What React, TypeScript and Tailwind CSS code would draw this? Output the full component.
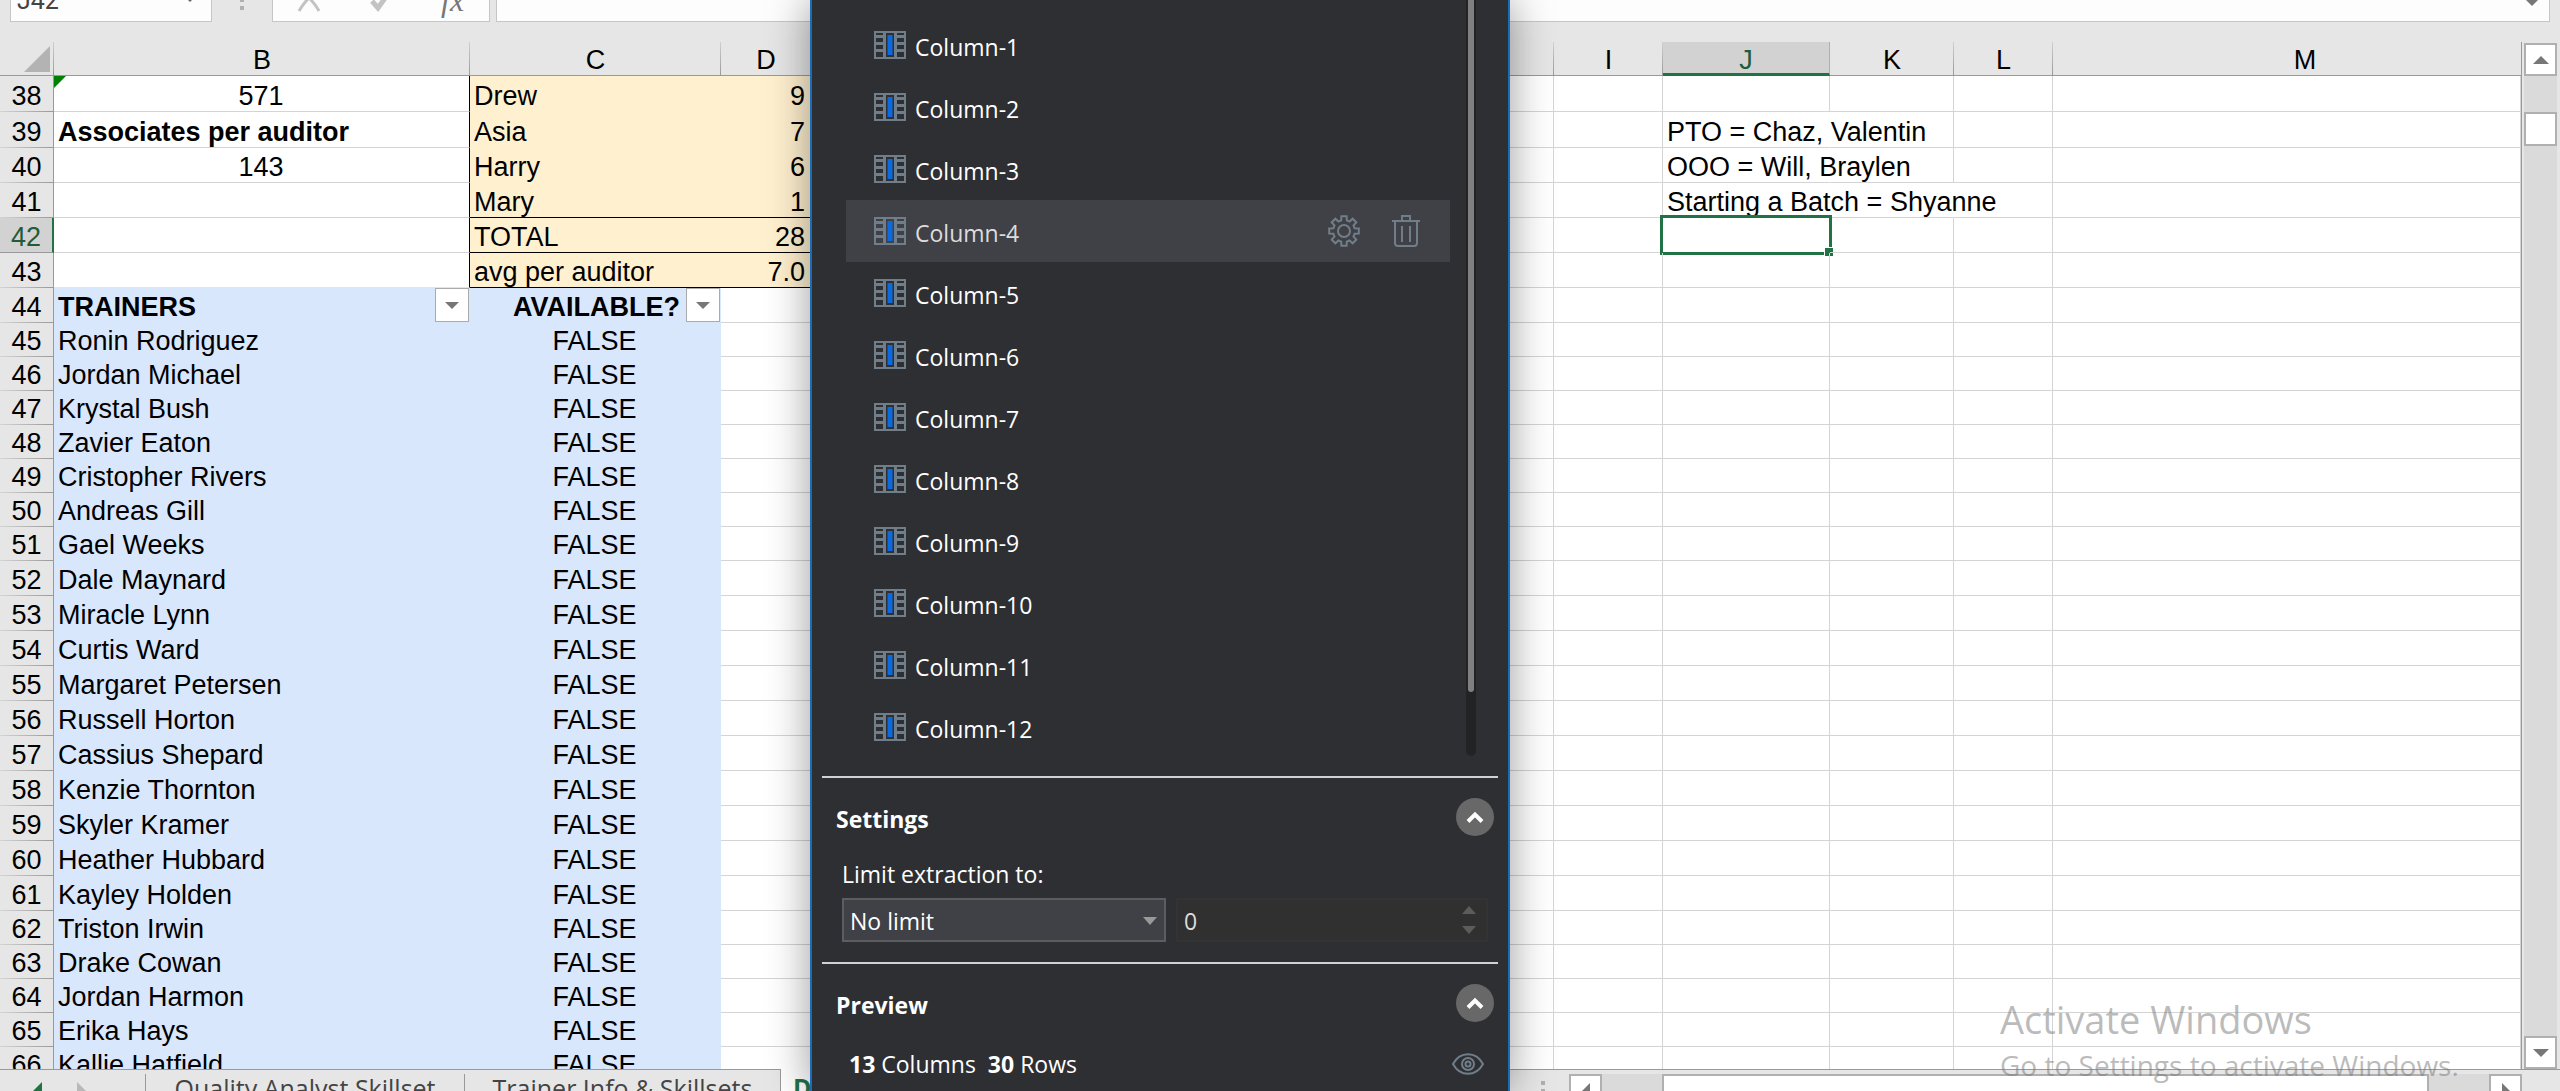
import React from "react";

type Cell = {
  text?: string;
  className?: string;
  filter?: string;
  flag?: boolean;
  active?: boolean;
};

const columns = [
  { id: "B", width: "w-[416px]" },
  { id: "C", width: "w-[251px]" },
  { id: "D", width: "w-[90px]" },
  { id: "E", width: "w-[186px]" },
  { id: "F", width: "w-[186px]" },
  { id: "G", width: "w-[186px]" },
  { id: "H", width: "w-[185px]" },
  { id: "I", width: "w-[109px]" },
  { id: "J", width: "w-[167px]" },
  { id: "K", width: "w-[124px]" },
  { id: "L", width: "w-[99px]" },
  { id: "M", width: "" },
];

const trainers = [
  "Ronin Rodriguez",
  "Jordan Michael",
  "Krystal Bush",
  "Zavier Eaton",
  "Cristopher Rivers",
  "Andreas Gill",
  "Gael Weeks",
  "Dale Maynard",
  "Miracle Lynn",
  "Curtis Ward",
  "Margaret Petersen",
  "Russell Horton",
  "Cassius Shepard",
  "Kenzie Thornton",
  "Skyler Kramer",
  "Heather Hubbard",
  "Kayley Holden",
  "Triston Irwin",
  "Drake Cowan",
  "Jordan Harmon",
  "Erika Hays",
  "Kallie Hatfield",
];

const grid = "border-r border-[#d4d4d4] pr-[5px]";
const yellow = "bg-[#fff0cf] border-[#fff0cf] pr-1.5";
const yellowTotal = "bg-[#fff0cf] border-b-black pr-1.5";
const blue = "border-r bg-[#d9e7fd] border-[#d9e7fd] pr-[5px]";
const blueFilter = "border-r bg-[#d9e7fd] border-[#d9e7fd] pr-10";
const besideYellow = "border-r border-b-[#d4d4d4] border-r-black pr-[5px]";
const open = "border-r border-b-[#d4d4d4] border-r-transparent";

const rows: Record<number, Record<string, Cell>> = {
  38: {
    B: { text: "571", className: `text-center ${besideYellow}`, flag: true },
    C: { text: "Drew", className: yellow },
    D: { text: "9", className: `text-right ${yellow}` },
  },
  39: {
    B: { text: "Associates per auditor", className: `font-bold ${besideYellow}` },
    C: { text: "Asia", className: yellow },
    D: { text: "7", className: `text-right ${yellow}` },
    J: { text: "PTO = Chaz, Valentin", className: open },
  },
  40: {
    B: { text: "143", className: `text-center ${besideYellow}` },
    C: { text: "Harry", className: yellow },
    D: { text: "6", className: `text-right ${yellow}` },
    J: { text: "OOO = Will, Braylen", className: open },
  },
  41: {
    B: { className: besideYellow },
    C: { text: "Mary", className: yellowTotal },
    D: { text: "1", className: `text-right ${yellowTotal}` },
    J: { text: "Starting a Batch = Shyanne", className: open },
    K: { className: open },
  },
  42: {
    B: { className: besideYellow },
    C: { text: "TOTAL", className: yellowTotal },
    D: { text: "28", className: `text-right ${yellowTotal}` },
    J: { className: grid, active: true },
  },
  43: {
    B: { className: "border-r border-b-[#d9e7fd] border-r-black" },
    C: { text: "avg per auditor", className: yellowTotal },
    D: { text: "7.0", className: `text-right ${yellowTotal}` },
  },
  44: {
    B: { text: "TRAINERS", className: `font-bold ${blueFilter}`, filter: "Filter trainers" },
    C: { text: "AVAILABLE?", className: `font-bold text-right ${blueFilter}`, filter: "Filter availability" },
  },
};
trainers.forEach((name, i) => {
  rows[45 + i] = {
    B: { text: name, className: blue },
    C: { text: "FALSE", className: `text-center ${blue}` },
  };
});

function rowHeight(n: number) {
  if (n <= 39) return "h-[36px]";
  if ((n >= 45 && n <= 51) || n >= 62) return "h-[34px]";
  return "h-[35px]";
}

function Triangle({ dir, className }: { dir: "up" | "down" | "left" | "right"; className: string }) {
  const d = {
    up: "M0 10 L10 0 L20 10Z",
    down: "M0 0 L20 0 L10 10Z",
    left: "M10 0 L10 20 L0 10Z",
    right: "M0 0 L10 10 L0 20Z",
  }[dir];
  const box = dir === "up" || dir === "down" ? "0 0 20 10" : "0 0 10 20";
  return (
    <svg viewBox={box} preserveAspectRatio="none" className={`fill-current ${className}`} aria-hidden="true">
      <path d={d} />
    </svg>
  );
}

function GridCell({ cell }: { cell?: Cell }) {
  return (
    <td className={`relative border-b py-0 pl-1 align-bottom whitespace-nowrap ${cell?.className ?? grid}`}>
      {cell?.text}
      {cell?.flag && (
        <svg viewBox="0 0 12 12" className="absolute top-0 left-0 h-3 w-3 fill-[#008000]" aria-hidden="true">
          <path d="M0 0H12L0 12Z" />
        </svg>
      )}
      {cell?.filter && (
        <button
          aria-label={cell.filter}
          className="absolute top-0 right-0 flex h-[34px] w-[34px] items-center justify-center border border-[#ababab] bg-white text-[#777]"
        >
          <Triangle dir="down" className="h-[7px] w-[14px]" />
        </button>
      )}
      {cell?.active && (
        <span className="absolute -top-[3px] -right-[3px] -bottom-[3px] -left-[3px] border-[3px] border-[#217346]">
          <span className="absolute -right-1 -bottom-1 h-[9px] w-[9px] border-t border-l border-white bg-[#217346]" />
        </span>
      )}
    </td>
  );
}

function FormulaBar() {
  return (
    <div className="flex h-[22px] items-end overflow-hidden pr-[10px] pl-[10px]">
      <div className="relative h-11 w-[202px] shrink-0">
        <input
          aria-label="Name box"
          defaultValue="J42"
          className="h-full w-full border border-[#c6c6c6] bg-[#fdfdfd] px-1.5 font-['Roboto',sans-serif] text-[25px] text-[#444]"
        />
        <Triangle dir="down" className="absolute right-[14px] bottom-5 h-2 w-4 text-[#666]" />
      </div>
      <div className="mb-3 ml-7 flex h-[10px] w-1 shrink-0 flex-col justify-between">
        <span className="h-[2px] w-1 bg-[#b0b0b0]" />
        <span className="h-1 w-1 bg-[#b0b0b0]" />
      </div>
      <div className="ml-7 flex h-11 w-[218px] shrink-0 items-center border border-[#c6c6c6] bg-[#fdfdfd] pr-5 pl-5">
        <button aria-label="Cancel" className="ml-1 text-[#c3c3c3]">
          <svg viewBox="0 0 24 24" className="h-6 w-6 fill-none stroke-current stroke-3" aria-hidden="true">
            <path d="M2 1C7 4 18 15 22 23M22 1C17 4 7 14 2 23" />
          </svg>
        </button>
        <button aria-label="Enter" className="ml-12 text-[#c3c3c3]">
          <svg viewBox="0 0 24 24" className="h-6 w-6 fill-none stroke-current stroke-5" aria-hidden="true">
            <path d="M3 13L9 20L21 3" />
          </svg>
        </button>
        <button
          aria-label="Insert function"
          className="ml-12 font-['Liberation_Serif',serif] text-[32px] leading-8 text-[#777] italic"
        >
          fx
        </button>
      </div>
      <div className="relative ml-1.5 h-11 flex-1">
        <input aria-label="Formula" className="h-full w-full border border-[#c6c6c6] bg-[#fdfdfd] px-2" />
        <Triangle dir="down" className="absolute right-[10px] bottom-4 h-2 w-4 text-[#777]" />
      </div>
    </div>
  );
}

function Sheet() {
  return (
    <table className="w-full table-fixed border-separate border-spacing-0 bg-white text-[27px] leading-[29px] text-black">
      <colgroup>
        <col className="w-[54px]" />
        {columns.map((c) => (
          <col key={c.id} className={c.width} />
        ))}
      </colgroup>
      <thead>
        <tr className="h-[34px] bg-[#e6e6e6]">
          <th className="relative border-b border-[#999] bg-[linear-gradient(#d0d0d0,#999)] bg-[length:1px_100%] bg-right bg-no-repeat p-0">
            <svg viewBox="0 0 26 26" className="absolute right-1 bottom-[3px] h-[26px] w-[26px] fill-[#b3b3b3]" aria-hidden="true">
              <path d="M26 0V26H0Z" />
            </svg>
          </th>
          {columns.map((c) => (
            <th
              key={c.id}
              scope="col"
              className={
                c.id === "J"
                  ? "border-r border-b-[3px] border-r-[#b0b0b0] border-b-[#217346] bg-[#d2d2d2] p-0 align-bottom leading-[26px] font-normal text-[#1e5c3a]"
                  : "border-b border-[#999] bg-[linear-gradient(#d0d0d0,#999)] bg-[length:1px_100%] bg-right bg-no-repeat p-0 align-bottom font-normal last:bg-none last:pl-9"
              }
            >
              {c.id}
            </th>
          ))}
        </tr>
      </thead>
      <tbody>
        {Object.keys(rows).map((key) => {
          const n = Number(key);
          return (
            <tr key={n} className={rowHeight(n)}>
              <th
                scope="row"
                className={
                  n === 42
                    ? "border-r-2 border-b border-r-[#217346] border-b-[#999] bg-[#d2d2d2] p-0 align-bottom font-normal text-[#1e5c3a]"
                    : "border-r border-[#999] bg-[#e6e6e6] bg-[linear-gradient(to_right,#d4d4d4,#999)] bg-[length:100%_1px] bg-bottom bg-no-repeat p-0 pb-px align-bottom font-normal"
                }
              >
                {n}
              </th>
              {columns.map((c) => (
                <GridCell key={c.id} cell={rows[n][c.id]} />
              ))}
            </tr>
          );
        })}
      </tbody>
    </table>
  );
}

function VerticalScroll() {
  return (
    <div className="mt-px mr-[3px] ml-0.5 flex w-[33px] shrink-0 flex-col bg-[#dadada]">
      <button aria-label="Scroll up" className="flex h-[33px] items-center justify-center border-2 border-[#b0b0b0] bg-white text-[#777]">
        <Triangle dir="up" className="h-2 w-4" />
      </button>
      <div className="mt-9 h-[34px] border-2 border-[#b0b0b0] bg-white" />
      <button
        aria-label="Scroll down"
        className="mt-auto flex h-[33px] items-center justify-center border-2 border-[#b0b0b0] bg-white text-[#777]"
      >
        <Triangle dir="down" className="h-2 w-4" />
      </button>
    </div>
  );
}

function SheetTabs() {
  return (
    <div className="flex h-[22px] items-start overflow-hidden font-['Open_Sans',sans-serif] text-[25px] text-[#444]">
      <div className="flex w-[781px] shrink-0 items-start border-t border-r border-[#999]">
        <div className="mt-1 flex h-9 w-[146px] shrink-0 items-center border-r border-[#999] pl-8">
          <button aria-label="Previous sheet" className="text-[#217346]">
            <Triangle dir="left" className="h-5 w-[10px]" />
          </button>
          <button aria-label="Next sheet" className="ml-[35px] text-[#b8b8b8]">
            <Triangle dir="right" className="h-5 w-[10px]" />
          </button>
        </div>
        <button className="mt-1 flex h-9 w-[319px] shrink-0 justify-center border-r border-[#999] leading-7">
          Quality Analyst Skillset
        </button>
        <button className="mt-1 flex h-9 flex-1 justify-center leading-7">Trainer Info &amp; Skillsets</button>
      </div>
      <button className="flex h-10 w-[728px] shrink-0 bg-white pt-1 pl-3 leading-7 font-bold text-[#217346]">Data</button>
      <div className="flex min-w-0 flex-1 items-start border-t border-[#999] pr-[38px]">
        <div className="mt-[11px] ml-8 flex w-1 shrink-0 flex-col gap-1">
          <span className="h-1 w-1 bg-[#b0b0b0]" />
          <span className="h-1 w-1 bg-[#b0b0b0]" />
        </div>
        <div className="mt-1 ml-6 flex h-[33px] min-w-0 flex-1 bg-[#dadada]">
          <button
            aria-label="Scroll left"
            className="flex w-[33px] shrink-0 items-center justify-center border-2 border-[#b0b0b0] bg-white text-[#777]"
          >
            <Triangle dir="left" className="h-4 w-2" />
          </button>
          <div className="mr-[60px] ml-[60px] flex-1 border-2 border-[#b0b0b0] bg-white" />
          <button
            aria-label="Scroll right"
            className="flex w-[33px] shrink-0 items-center justify-center border-2 border-[#b0b0b0] bg-white text-[#777]"
          >
            <Triangle dir="right" className="h-4 w-2" />
          </button>
        </div>
      </div>
    </div>
  );
}

function ColumnIcon() {
  return (
    <svg viewBox="0 0 32 28" className="h-7 w-8 shrink-0" aria-hidden="true">
      <path
        className="fill-[#707e89]"
        fillRule="evenodd"
        d="M0 0H32V28H0Z M2 2V4H9V2Z M2 7V11H9V7Z M2 14V18H9V14Z M2 21V26H9V21Z M23 2V4H30V2Z M23 7V11H30V7Z M23 14V18H30V14Z M23 21V26H30V21Z M12 2V26H20V2Z"
      />
      <rect x="13.5" y="4" width="5" height="20" fill="#0a6be0" />
    </svg>
  );
}

const gearPath =
  Array.from({ length: 8 }, (_, k) => {
    const a = (k * Math.PI) / 4;
    const at = (r: number, w: number) =>
      `${(16 + r * Math.cos(a) - w * Math.sin(a)).toFixed(2)} ${(16 + r * Math.sin(a) + w * Math.cos(a)).toFixed(2)}`;
    return `${k ? "L" : "M"}${at(10.6, -2.8)}L${at(14.8, -2.6)}L${at(14.8, 2.6)}L${at(10.6, 2.8)}`;
  }).join("") + "Z";

function GearIcon() {
  return (
    <svg viewBox="0 0 32 32" className="h-8 w-8 fill-none stroke-current stroke-2" aria-hidden="true">
      <path d={gearPath} />
      <circle cx="16" cy="16" r="6" />
    </svg>
  );
}

function TrashIcon() {
  return (
    <svg viewBox="0 0 28 32" className="h-8 w-7 fill-none stroke-current stroke-2" aria-hidden="true">
      <path d="M0 6H28M10 6V1H18V6M3 6V28Q3 31 6 31H22Q25 31 25 28V6M10 11V27M18 11V27" />
    </svg>
  );
}

function CollapseButton({ label }: { label: string }) {
  return (
    <button aria-label={label} className="flex h-[38px] w-[38px] items-center justify-center rounded-full bg-[#686868] text-white">
      <svg viewBox="0 0 18 12" className="h-3 w-[18px] fill-none stroke-current stroke-4" aria-hidden="true">
        <path d="M2 10.5L9 3.5L16 10.5" />
      </svg>
    </button>
  );
}

function ExtractPanel() {
  return (
    <section
      aria-label="Data extraction"
      className="absolute top-0 bottom-0 left-[810px] w-[700px] overflow-hidden border-x-2 border-[#1a6bb8] bg-[#2e2f33] font-['Open_Sans',sans-serif] text-[23px] leading-8 text-white shadow-[0_0_40px_rgba(0,0,0,0.4)]"
    >
      <div className="flex h-[756px] justify-between pr-8 pl-[34px]">
        <ul className="w-[604px] pt-[14px]">
          {Array.from({ length: 12 }, (_, i) => i + 1).map((n) => (
            <li
              key={n}
              className={
                n === 4
                  ? "flex h-[62px] items-center bg-[#404146] pr-[30px] pl-7 text-[#dcdcdc]"
                  : "flex h-[62px] items-center pr-[30px] pl-7"
              }
            >
              <ColumnIcon />
              <span className="ml-[9px] flex-1 pt-[3px]">Column-{n}</span>
              {n === 4 && (
                <span className="flex gap-8 text-[#707e89]">
                  <button aria-label="Column settings">
                    <GearIcon />
                  </button>
                  <button aria-label="Delete column">
                    <TrashIcon />
                  </button>
                </span>
              )}
            </li>
          ))}
        </ul>
        <div className="flex w-[10px] justify-center rounded-b-full bg-[#222325]">
          <div className="h-[692px] w-1.5 rounded-b-full bg-[#808080]" />
        </div>
      </div>

      <div className="mx-[10px] mt-5 border-t-2 border-[#cdd3d0]" />

      <div className="mt-5 flex h-[38px] items-center justify-between pr-[14px] pl-6">
        <h2 className="pt-[3px] font-bold">Settings</h2>
        <CollapseButton label="Collapse settings" />
      </div>
      <div className="mt-[22px] pr-5 pl-[30px]">
        <label htmlFor="limit" className="block h-8">
          Limit extraction to:
        </label>
        <div className="mt-2 flex gap-[10px]">
          <div className="relative w-[324px]">
            <select
              id="limit"
              className="h-11 w-full appearance-none border-2 border-[#5c5d60] bg-[#404146] px-1.5 pt-[2px] text-white"
            >
              <option>No limit</option>
            </select>
            <Triangle dir="down" className="pointer-events-none absolute top-[19px] right-[9px] h-2 w-[14px] text-[#999]" />
          </div>
          <div className="relative flex-1">
            <input
              aria-label="Row limit"
              defaultValue="0"
              disabled
              className="h-11 w-full border-2 border-[#333] bg-[#303030] px-1.5 pt-[2px] text-[#dcdcdc]"
            />
            <div className="absolute top-2 right-3 flex flex-col gap-3 text-[#5c5c5c]">
              <button aria-label="Increase" disabled>
                <Triangle dir="up" className="block h-2 w-[14px]" />
              </button>
              <button aria-label="Decrease" disabled>
                <Triangle dir="down" className="block h-2 w-[14px]" />
              </button>
            </div>
          </div>
        </div>
      </div>

      <div className="mx-[10px] mt-5 border-t-2 border-[#cdd3d0]" />

      <div className="mt-5 flex h-[38px] items-center justify-between pr-[14px] pl-6">
        <h2 className="pt-[3px] font-bold">Preview</h2>
        <CollapseButton label="Collapse preview" />
      </div>
      <div className="mt-[26px] flex items-center justify-between pr-6 pl-[37px]">
        <p>
          <b>13</b> Columns &nbsp;<b>30</b> Rows
        </p>
        <button aria-label="Show preview" className="text-[#707e89]">
          <svg viewBox="0 0 32 22" className="h-[22px] w-8 fill-none stroke-current stroke-2" aria-hidden="true">
            <path d="M1 11C8 -2 24 -2 31 11C24 24 8 24 1 11Z" />
            <circle cx="16" cy="11" r="6" />
            <circle cx="16" cy="11" r="2.5" />
          </svg>
        </button>
      </div>
    </section>
  );
}

export default function App() {
  return (
    <div className="relative flex h-screen flex-col overflow-hidden bg-[#e6e6e6] font-['Liberation_Sans',sans-serif]">
      <FormulaBar />
      <div className="mt-5 flex min-h-0 flex-1">
        <div className="min-w-0 flex-1 overflow-hidden border-r border-[#999]">
          <Sheet />
        </div>
        <VerticalScroll />
      </div>
      <SheetTabs />
      <ExtractPanel />
      <div className="pointer-events-none absolute right-[106px] bottom-1.5 w-[454px] font-['Open_Sans',sans-serif] whitespace-nowrap text-[#777]/50">
        <p className="text-[38px] leading-[52px]">Activate Windows</p>
        <p className="text-[28px] leading-10">Go to Settings to activate Windows.</p>
      </div>
    </div>
  );
}
